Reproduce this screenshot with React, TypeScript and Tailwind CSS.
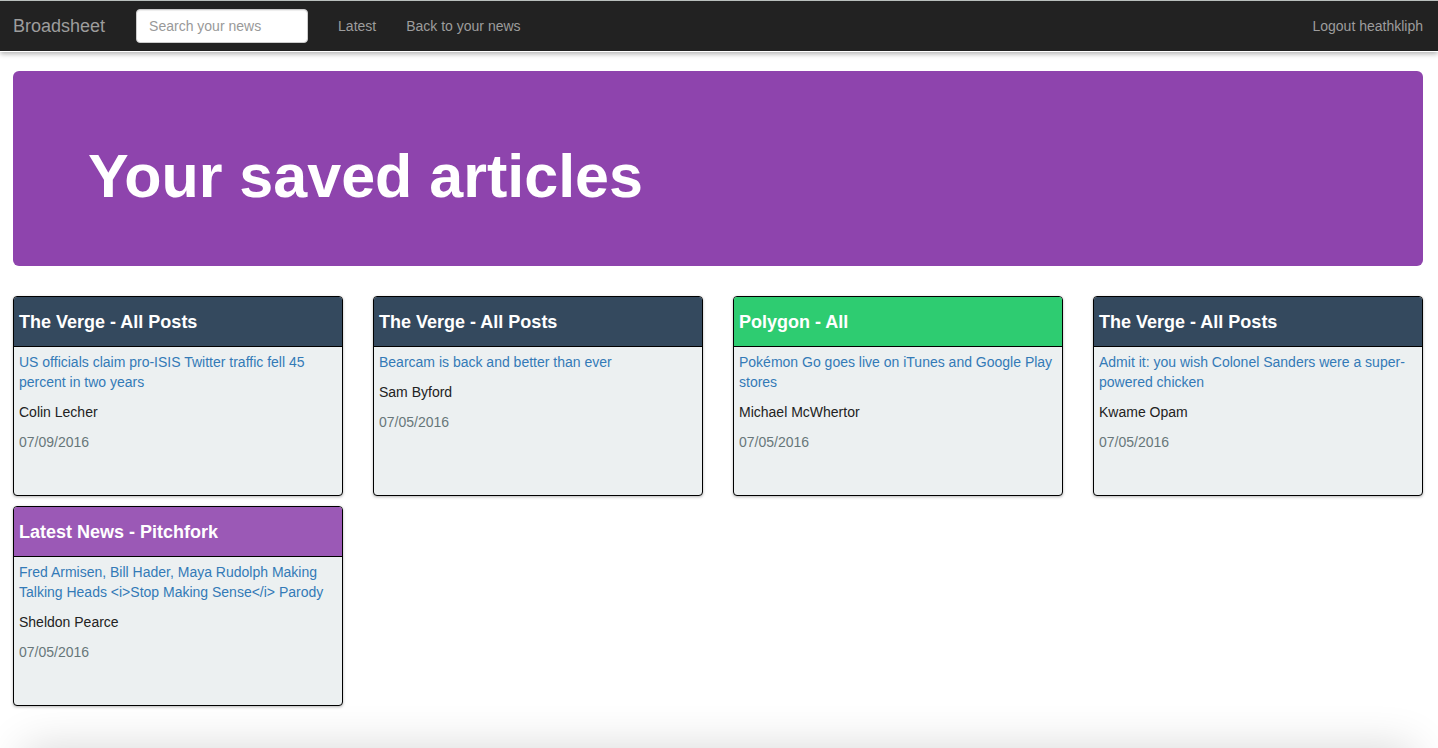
type Article = {
  source: string;
  headerColor: string;
  title: string;
  author: string;
  date: string;
};

const articles: Article[] = [
  {
    source: "The Verge - All Posts",
    headerColor: "bg-[#34495e]",
    title: "US officials claim pro-ISIS Twitter traffic fell 45 percent in two years",
    author: "Colin Lecher",
    date: "07/09/2016",
  },
  {
    source: "The Verge - All Posts",
    headerColor: "bg-[#34495e]",
    title: "Bearcam is back and better than ever",
    author: "Sam Byford",
    date: "07/05/2016",
  },
  {
    source: "Polygon - All",
    headerColor: "bg-[#2ecc71]",
    title: "Pokémon Go goes live on iTunes and Google Play stores",
    author: "Michael McWhertor",
    date: "07/05/2016",
  },
  {
    source: "The Verge - All Posts",
    headerColor: "bg-[#34495e]",
    title: "Admit it: you wish Colonel Sanders were a super-powered chicken",
    author: "Kwame Opam",
    date: "07/05/2016",
  },
  {
    source: "Latest News - Pitchfork",
    headerColor: "bg-[#9b59b6]",
    title: "Fred Armisen, Bill Hader, Maya Rudolph Making Talking Heads <i>Stop Making Sense</i> Parody",
    author: "Sheldon Pearce",
    date: "07/05/2016",
  },
];

function Navbar() {
  return (
    <header className="border-t border-[#b9bfbd] shadow-[0_2px_5px_rgba(0,0,0,0.3)]">
      <nav className="flex h-[51px] items-center border-b border-white bg-[#222222] px-[13px] text-[#9d9d9d]">
        <a href="#" className="mr-[31px] text-lg leading-5">
          Broadsheet
        </a>
        <form role="search" className="mr-[30px]">
          <input
            type="search"
            aria-label="Search your news"
            placeholder="Search your news"
            className="block h-[34px] w-[172px] rounded border border-[#cccccc] bg-white px-3 text-sm text-[#555555] shadow-[inset_0_1px_1px_rgba(0,0,0,0.075)] placeholder:text-[#999999] placeholder:opacity-100"
          />
        </form>
        <ul className="flex flex-1 items-center gap-[30px]">
          <li>
            <a href="#">Latest</a>
          </li>
          <li>
            <a href="#">Back to your news</a>
          </li>
          <li className="ml-auto pr-[2px]">
            <a href="#">Logout heathkliph</a>
          </li>
        </ul>
      </nav>
    </header>
  );
}

function ArticleCard({ article }: { article: Article }) {
  return (
    <article className="min-h-[200px] overflow-hidden rounded border border-black bg-[#ecf0f1] shadow-[0_1px_3px_rgba(0,0,0,0.3)]">
      <h2
        className={`${article.headerColor} border-b border-black px-[5px] pt-[15px] pb-[14px] text-lg leading-5 font-bold text-white`}
      >
        {article.source}
      </h2>
      <div className="flex flex-col gap-[10px] p-[5px]">
        <a href="#" className="text-[#337ab7]">
          {article.title}
        </a>
        <p>{article.author}</p>
        <p className="text-[#68777a]">{article.date}</p>
      </div>
    </article>
  );
}

export default function App() {
  return (
    <div className="relative min-h-screen bg-white font-['Liberation_Sans',Arial,sans-serif] text-sm leading-5 text-[#222222]">
      <Navbar />
      <main className="pt-[19px] pr-[15px] pb-10 pl-[13px]">
        <section className="mb-[30px] rounded-md bg-[#8e44ad] px-[75px] pt-[71px] pb-[55px] text-white">
          <h1 className="text-[61px] leading-[69px] font-bold">Your saved articles</h1>
        </section>
        <section className="grid grid-cols-1 gap-x-[30px] gap-y-[10px] sm:grid-cols-2 lg:grid-cols-4">
          {articles.map((article) => (
            <ArticleCard key={article.title} article={article} />
          ))}
        </section>
      </main>
      <div
        aria-hidden="true"
        className="pointer-events-none fixed inset-x-6 top-full h-16 shadow-[0_0_45px_rgba(0,0,0,0.16)]"
      />
    </div>
  );
}
